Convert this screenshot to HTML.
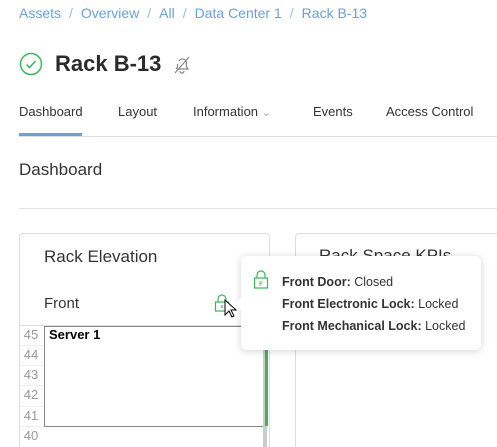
<!DOCTYPE html>
<html><head><style>
*{margin:0;padding:0;box-sizing:border-box}
html,body{width:497px;height:447px;overflow:hidden}
body{background:#fff;font-family:"Liberation Sans",sans-serif;color:#333;position:relative}
.a{position:absolute;white-space:nowrap}
.bc{top:5px;left:19px;font-size:14px;color:#6a9fe0}
.bc span{color:#9cbbe6;margin:0 8px}
.title{top:51px;left:55px;font-size:22px;font-weight:bold;color:#2b2b2b}
.tab{top:104px;font-size:13px;color:#333}
.h2{font-size:17px;color:#333}
.num{left:20px;width:22px;text-align:center;font-size:13px;color:#999}
.tt{font-size:12.5px;color:#333;left:282px}
</style></head><body>
<div class="a bc">Assets<span>/</span>Overview<span>/</span>All<span>/</span>Data Center 1<span>/</span>Rack B-13</div>
<svg class="a" style="left:19px;top:52px" width="24" height="24" viewBox="0 0 24 24"><circle cx="12" cy="12" r="10.5" fill="none" stroke="#3cb55a" stroke-width="1.5"/><path d="M7.5 12.5l3 3 6-6.5" fill="none" stroke="#3cb55a" stroke-width="1.5"/></svg>
<div class="a title">Rack B-13</div>
<svg class="a" style="left:172px;top:55px" width="20" height="20" viewBox="0 0 20 20" fill="none" stroke="#888" stroke-width="1.2"><path d="M5 14h11l-1.5-2V8a4 4 0 0 0-7.5-2M5.5 9v3L4 14"/><path d="M8 16a2 2 0 0 0 4 0"/><path d="M3 18L17 2"/></svg>
<div class="a tab" style="left:19px">Dashboard</div>
<div class="a tab" style="left:118px">Layout</div>
<div class="a tab" style="left:193px">Information <span style="color:#aaa;font-size:11px">&#8964;</span></div>
<div class="a tab" style="left:313px">Events</div>
<div class="a tab" style="left:386px">Access Control</div>
<div class="a" style="left:19px;top:136px;width:478px;height:1px;background:#ddd"></div>
<div class="a" style="left:19px;top:133px;width:63px;height:3px;background:#6a9fe0"></div>
<div class="a h2" style="left:19px;top:160px">Dashboard</div>
<div class="a" style="left:19px;top:208px;width:478px;height:1px;background:#e2e2e2"></div>
<div class="a" style="left:19px;top:233px;width:251px;height:230px;border:1px solid #ddd;border-radius:4px"></div>
<div class="a" style="left:295px;top:233px;width:230px;height:230px;border:1px solid #ddd;border-radius:4px"></div>
<div class="a h2" style="left:319px;top:246px">Rack Space KPIs</div>
<div class="a h2" style="left:44px;top:247px">Rack Elevation</div>
<div class="a" style="left:44px;top:295px;font-size:15px">Front</div>
<svg class="a" style="left:214px;top:294px" width="16" height="18" viewBox="0 0 16 18" fill="none" stroke="#3cb55a" stroke-width="1.2"><path d="M4 8V5a4 4 0 0 1 8 0v3"/><rect x="1.5" y="8" width="13" height="9"/><path d="M8 11v3"/></svg>
<svg class="a" style="left:224px;top:299px" width="14" height="20" viewBox="0 0 14 20"><path d="M1 1v15l4-4 3 6 2-1-3-6h5z" fill="#fff" stroke="#000" stroke-width="1"/></svg>
<div class="a" style="left:19px;top:325px;width:250px;height:1px;background:#ddd"></div>
<div class="a num" style="top:327px">45</div>
<div class="a num" style="top:347px">44</div>
<div class="a num" style="top:367px">43</div>
<div class="a num" style="top:387px">42</div>
<div class="a num" style="top:408px">41</div>
<div class="a num" style="top:428px">40</div>
<div class="a" style="left:20px;top:345px;width:24px;height:1px;background:#eee"></div>
<div class="a" style="left:20px;top:365px;width:24px;height:1px;background:#eee"></div>
<div class="a" style="left:20px;top:385px;width:24px;height:1px;background:#eee"></div>
<div class="a" style="left:20px;top:406px;width:24px;height:1px;background:#eee"></div>
<div class="a" style="left:20px;top:426px;width:24px;height:1px;background:#eee"></div>
<div class="a" style="left:44px;top:326px;width:221px;height:101px;border:1px solid #888;background:#fff"></div>
<div class="a" style="left:49px;top:327px;font-size:13px;font-weight:bold;color:#000">Server 1</div>
<div class="a" style="left:263px;top:326px;width:4px;height:121px;background:#ccc"></div>
<div class="a" style="left:265px;top:340px;width:3px;height:86px;background:#3cb55a"></div>
<div class="a" style="left:241px;top:256px;width:240px;height:94px;background:#fff;border-radius:6px;box-shadow:0 1px 8px rgba(0,0,0,.18)"></div>
<div class="a" style="left:235px;top:297px;width:0;height:0;border-top:7px solid transparent;border-bottom:7px solid transparent;border-right:7px solid #fff"></div>
<svg class="a" style="left:253px;top:270px" width="16" height="19" viewBox="0 0 16 19" fill="none" stroke="#3cb55a" stroke-width="1.2"><path d="M4 8V5a4 4 0 0 1 8 0v3"/><rect x="1.5" y="8" width="13" height="10"/><text x="8" y="16" font-size="6" font-weight="bold" text-anchor="middle" fill="#3cb55a" stroke="none" font-family="Liberation Sans">F</text></svg>
<div class="a tt" style="top:275px"><b>Front Door:</b> Closed</div>
<div class="a tt" style="top:297px"><b>Front Electronic Lock:</b> Locked</div>
<div class="a tt" style="top:319px"><b>Front Mechanical Lock:</b> Locked</div>
</body></html>
